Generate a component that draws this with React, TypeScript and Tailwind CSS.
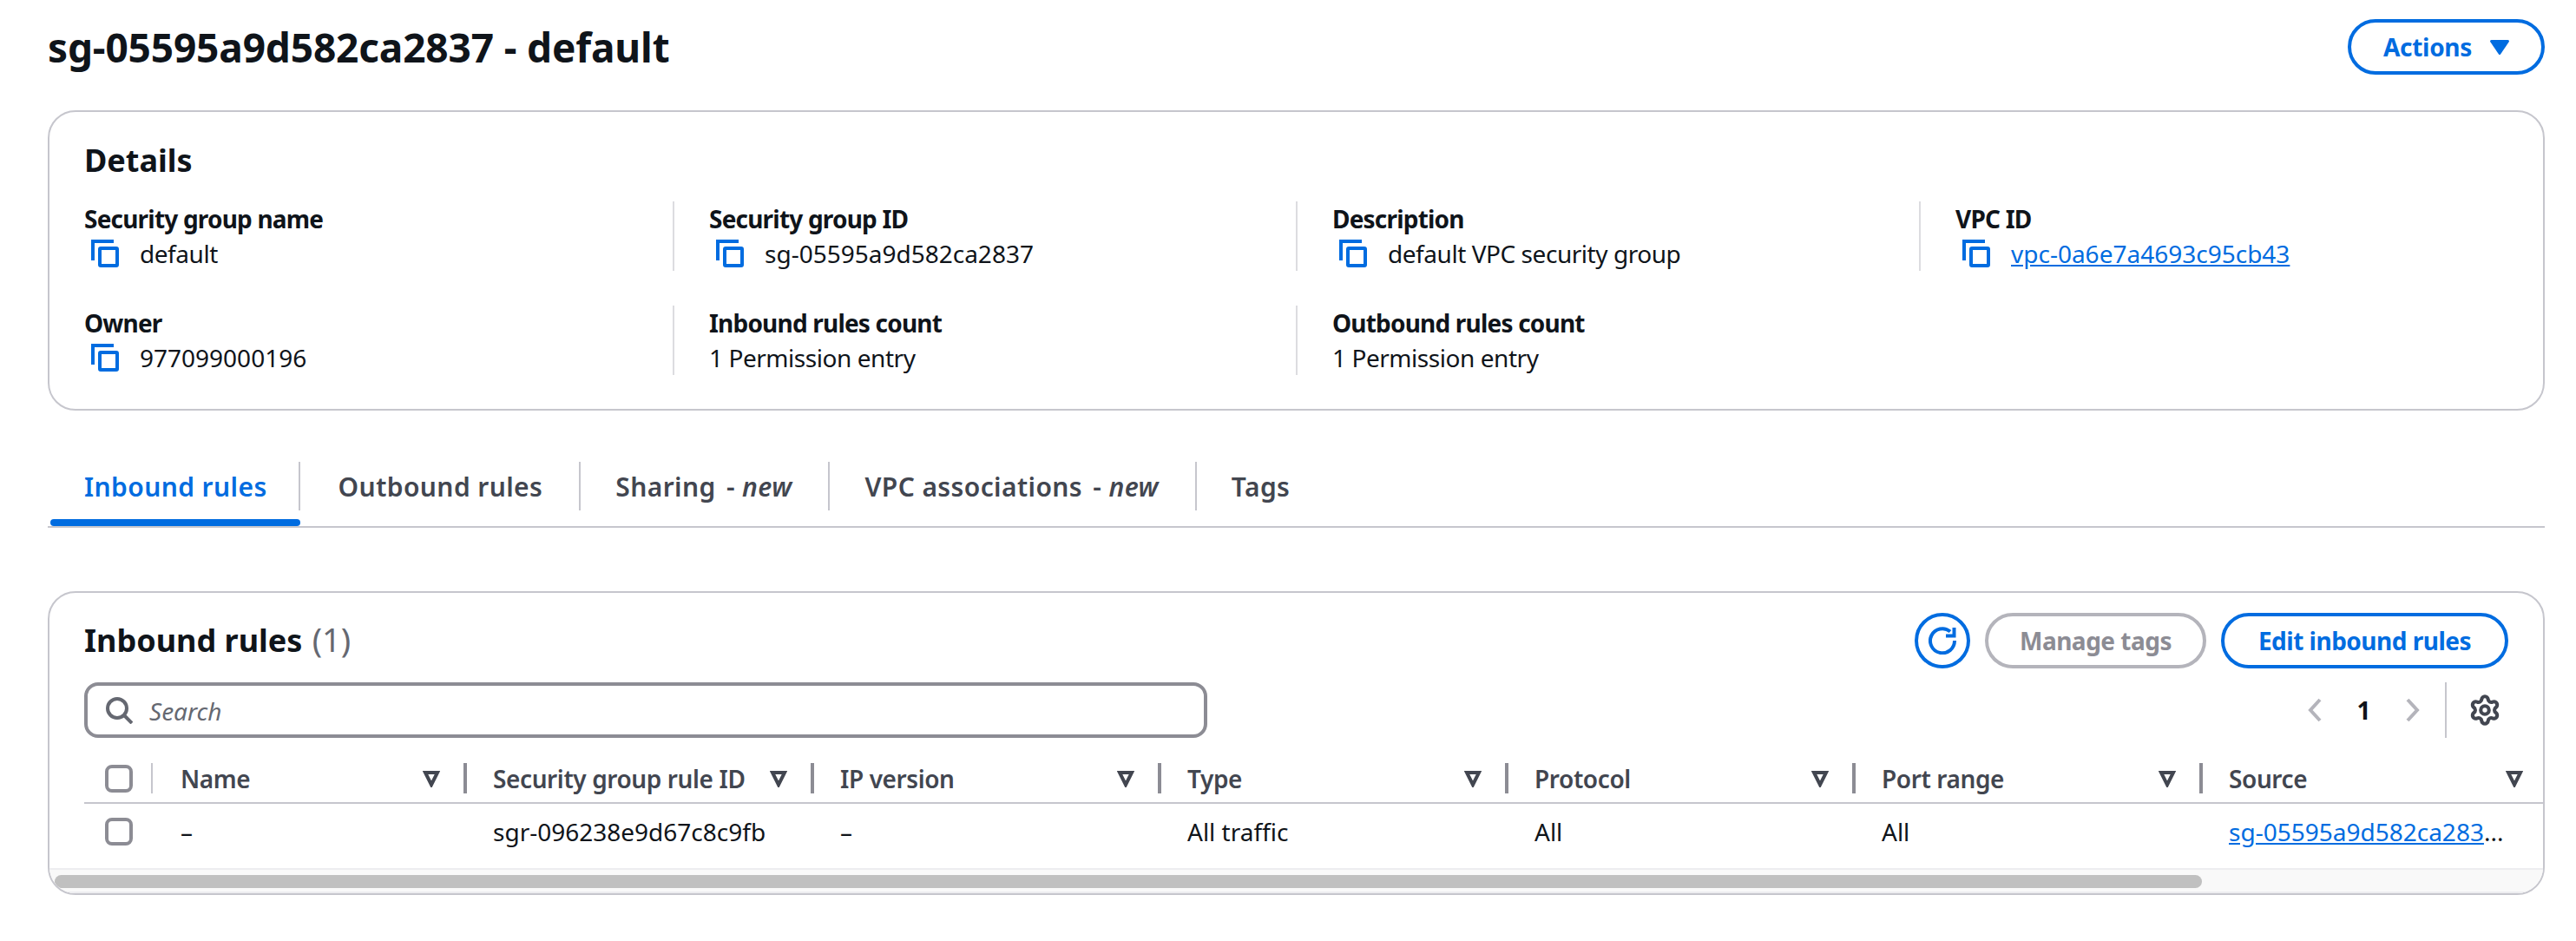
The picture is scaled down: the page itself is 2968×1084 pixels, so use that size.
import { Settings } from "lucide-react";

const BLUE = "#006ce0";

function CopyIcon() {
  return (
    <svg width="32" height="32" viewBox="0 0 32 32" fill="none" stroke={BLUE} strokeWidth="4" className="shrink-0">
      <path d="M2 24V2h24" />
      <rect x="10" y="10" width="20" height="20" rx="1" />
    </svg>
  );
}

function Caret() {
  return (
    <svg width="20" height="20" viewBox="0 0 20 20" fill="none" stroke="#424650" strokeWidth="4" className="shrink-0">
      <path d="M3 3h14l-7 14z" />
    </svg>
  );
}

function Field({ label, value, copy, link, tight }: { label: string; value: string; copy?: boolean; link?: boolean; tight?: boolean }) {
  return (
    <div className="h-20 border-l-2 border-[#dcdce0] pl-10 [&:nth-child(4n+1)]:border-l-0 [&:nth-child(4n+1)]:pl-0">
      <div className="text-[28px] leading-10 font-bold tracking-[-0.8px]">{label}</div>
      <div className={`flex items-center gap-6 text-[28px] leading-10 ${tight ? "tracking-[-0.45px]" : ""}`}>
        {copy && <span className="pl-2"><CopyIcon /></span>}
        {link ? <span className="text-[#006ce0] underline">{value}</span> : <span>{value}</span>}
      </div>
    </div>
  );
}

function Tab({ children, active, last }: { children: React.ReactNode; active?: boolean; last?: boolean }) {
  return (
    <div className="relative flex h-[74px] items-start">
      <div className={`flex h-14 items-center pl-10 text-[30px] font-semibold tracking-[0.4px] ${active ? "pr-[36px] text-[#006ce0]" : "pr-[42px] text-[#424650]"} ${last ? "" : "border-r-2 border-[#c6c6cd]"}`}>
        {children}
      </div>
      {active && <div className="absolute right-0 bottom-0 left-px h-2 rounded-[4px] bg-[#006ce0]" />}
    </div>
  );
}

function HeaderCell({ label, first }: { label: string; first?: boolean }) {
  return (
    <div className={`flex shrink-0 items-center justify-between pr-[27px] ${first ? "w-[358px]" : "w-[396px]"}`}>
      <span className={`font-semibold tracking-[-0.4px] ${first ? "pl-[32px]" : "pl-[30px]"}`}>{label}</span>
      <Caret />
    </div>
  );
}

const columns = ["Security group rule ID", "IP version", "Type", "Protocol", "Port range", "Source"];

export default function App() {
  return (
    <div className="min-h-[1084px] bg-white text-[#0f141a] [font-family:'Noto_Sans',sans-serif]">
      <div className="pr-9 pl-[55px]">
        {/* Page header */}
        <div className="flex h-[127px] items-start justify-between">
          <h1 className="pt-[24px] text-[46px] leading-[60px] font-bold tracking-[-0.15px]">sg-05595a9d582ca2837 - default</h1>
          <button className="mt-[22px] flex h-16 w-[227px] items-center justify-center gap-[21px] rounded-full border-4 border-[#006ce0] text-[28px] font-bold tracking-[-0.3px] text-[#006ce0]">
            Actions
            <svg width="22" height="17" viewBox="0 0 22 17" fill="#006ce0"><path d="M1.5 0h19a1.5 1.5 0 0 1 1.2 2.3L12.2 16.3a1.5 1.5 0 0 1-2.4 0L.3 2.3A1.5 1.5 0 0 1 1.5 0z" /></svg>
          </button>
        </div>

        {/* Details */}
        <section className="h-[346px] rounded-[32px] border-2 border-[#c6c6cd] px-10 pt-[30px]">
          <h2 className="text-[36px] leading-[52px] font-bold">Details</h2>
          <div className="mt-[21px] grid grid-cols-[678px_718px_718px_1fr] gap-y-10">
            <Field label="Security group name" value="default" copy tight />
            <Field label="Security group ID" value="sg-05595a9d582ca2837" copy />
            <Field label="Description" value="default VPC security group" copy tight />
            <Field label="VPC ID" value="vpc-0a6e7a4693c95cb43" copy link />
            <Field label="Owner" value="977099000196" copy />
            <Field label="Inbound rules count" value="1 Permission entry" tight />
            <Field label="Outbound rules count" value="1 Permission entry" tight />
          </div>
        </section>

        {/* Tabs */}
        <div className="mt-[59px] flex border-b-2 border-[#c6c6cd] pl-[2px]">
          <Tab active>Inbound rules</Tab>
          <Tab><span className="ml-1">Outbound rules</span></Tab>
          <Tab>Sharing&nbsp;<span className="ml-1">-</span>&nbsp;<i>new</i></Tab>
          <Tab>VPC associations&nbsp;<span className="ml-1">-</span>&nbsp;<i>new</i></Tab>
          <Tab last>Tags</Tab>
        </div>

        {/* Inbound rules */}
        <section className="mt-[73px] h-[350px] overflow-hidden rounded-[32px] border-2 border-[#c6c6cd]">
          <div className="flex items-start justify-between px-10 pt-[23px]">
            <h2 className="h-16 text-[36px] leading-[64px] font-bold">
              Inbound rules <span className="ml-[2px] text-[38px] leading-none font-normal text-[#656871]">(1)</span>
            </h2>
            <div className="flex items-center gap-[17px] text-[28px] font-bold tracking-[-0.5px]">
              <button className="flex size-16 items-center justify-center rounded-full border-4 border-[#006ce0]">
                <svg width="32" height="32" viewBox="0 0 32 32" fill="none" stroke={BLUE} strokeWidth="4">
                  <path d="M25 5.5A14 14 0 1 0 30 16" />
                  <path d="M29.5 1v9.5H20" />
                </svg>
              </button>
              <button className="flex h-16 w-[255px] items-center justify-center rounded-full border-4 border-[#b4b4bb] text-[#8c8c94]">Manage tags</button>
              <button className="flex h-16 w-[331px] items-center justify-center rounded-full border-4 border-[#006ce0] text-[#006ce0]">Edit inbound rules</button>
            </div>
          </div>

          <div className="mt-4 flex items-center justify-between pr-[48px] pl-10">
            <div className="flex h-16 w-[1294px] items-center gap-[19px] rounded-2xl border-4 border-[#8c8c94] pl-[21px]">
              <svg width="31" height="31" viewBox="0 0 31 31" fill="none" stroke="#656871" strokeWidth="4" className="shrink-0">
                <circle cx="13" cy="13" r="11" />
                <path d="M21 21l9 9" />
              </svg>
              <span className="pt-px text-[28px] text-[#656871] italic">Search</span>
            </div>
            <div className="flex h-16 items-center">
              <svg width="16" height="28" viewBox="0 0 16 28" fill="none" stroke="#b4b4bb" strokeWidth="4"><path d="M14 2L3 14l11 12" /></svg>
              <span className="w-[97px] text-center text-[28px] font-bold">1</span>
              <svg width="16" height="28" viewBox="0 0 16 28" fill="none" stroke="#b4b4bb" strokeWidth="4"><path d="M2 2l11 12L2 26" /></svg>
              <div className="mr-[25px] ml-[29px] h-16 border-l-2 border-[#c6c6cd]" />
              <Settings size={38} color="#424650" strokeWidth={2.6} />
            </div>
          </div>

          <div className="mt-[26px] flex h-[41px] items-center pl-[64px] text-[28px] text-[#424650]">
            <div className="size-8 shrink-0 rounded-lg border-4 border-[#8c8c94]" />
            <div className="ml-[21px] h-[35px] border-l-2 border-[#c6c6cd]" />
            <HeaderCell label="Name" first />
            {columns.map((c) => (
              <div key={c} className="flex items-center">
                <div className="h-[35px] border-l-4 border-[#8c8c94]" />
                <HeaderCell label={c} />
              </div>
            ))}
          </div>

          <div className="mt-[7px] ml-10 border-t-2 border-[#c6c6cd]" />
          <div className="flex h-[74px] items-center pb-[10px] pl-[64px] text-[28px]">
            <div className="size-8 shrink-0 rounded-lg border-4 border-[#8c8c94]" />
            <div className="w-[415px] shrink-0 pl-[55px]">–</div>
            <div className="w-[400px] shrink-0">sgr-096238e9d67c8c9fb</div>
            <div className="w-[400px] shrink-0">–</div>
            <div className="w-[400px] shrink-0">All traffic</div>
            <div className="w-[400px] shrink-0">All</div>
            <div className="w-[400px] shrink-0">All</div>
            <div className="shrink-0 text-[#006ce0]"><span className="underline">sg-05595a9d582ca283</span><span className="text-[#0f141a]">...</span></div>
          </div>

          {/* Horizontal scrollbar */}
          <div className="h-[29px] border-y-2 border-[#ededf0] bg-[#f9f9f9] pt-[6px] pl-[6px]">
            <div className="h-[15px] w-[2474px] rounded-full bg-[#c0c0c0]" />
          </div>
        </section>
      </div>
    </div>
  );
}
